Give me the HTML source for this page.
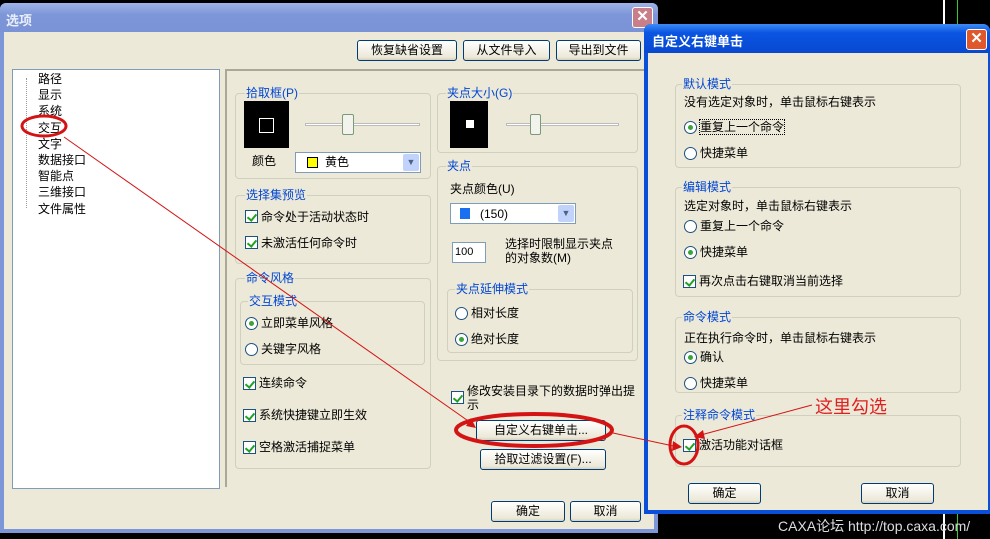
<!DOCTYPE html><html><head><meta charset="utf-8"><style>
*{margin:0;padding:0;box-sizing:border-box}
body{width:990px;height:539px;background:#000;position:relative;overflow:hidden;font-family:"Liberation Sans","Noto Sans CJK SC","WenQuanYi Zen Hei",sans-serif;font-size:12px;color:#000}
.a{position:absolute;white-space:nowrap}
.btn{position:absolute;border:1px solid #003c74;border-radius:3px;background:linear-gradient(#fff,#ece9d8 85%,#d6d0c0);text-align:center;line-height:18px;font-size:12px}
.grp{position:absolute;border:1px solid #d0d0bf;border-radius:4px}
.gl{position:absolute;background:#ece9d8;color:#0046d5;padding:0 1px;line-height:14px;font-size:12px}
.cb{position:absolute;width:13px;height:13px;border:1px solid #1c5180;background:#fff}
.cb:after{content:"";position:absolute;left:3px;top:1px;width:4px;height:7px;border:solid #21a121;border-width:0 2px 2px 0;transform:rotate(40deg)}
.rb{position:absolute;width:13px;height:13px;border:1px solid #1c5180;border-radius:50%;background:#fff}
.rb.on:after{content:"";position:absolute;left:3px;top:3px;width:5px;height:5px;border-radius:50%;background:#3aa33a}
.t{position:absolute;white-space:nowrap;line-height:14px}
</style></head><body>
<!-- dialog 1 -->
<div class="a" style="left:0;top:3px;width:658px;height:530px;background:#7d96d8;border-radius:6px 6px 0 0"></div>
<div class="a" style="left:0;top:3px;width:658px;height:29px;background:linear-gradient(#9fb3e6,#7d96d8 40%,#7a93d6);border-radius:6px 6px 0 0"></div>
<div class="a" style="left:6px;top:10px;color:#e8eefa;font-size:13px;font-weight:bold">选项</div>
<div class="a" style="left:632px;top:7px;width:21px;height:21px;background:#c97f8a;border:1px solid #fff;border-radius:3px;color:#fff;text-align:center;font-size:15px;line-height:18px;font-weight:bold">✕</div>
<div class="a" style="left:4px;top:32px;width:650px;height:497px;background:#ece9d8"></div>
<div class="btn" style="left:357px;top:40px;width:100px;height:21px">恢复缺省设置</div>
<div class="btn" style="left:463px;top:40px;width:87px;height:21px">从文件导入</div>
<div class="btn" style="left:556px;top:40px;width:85px;height:21px">导出到文件</div>
<div class="a" style="left:12px;top:69px;width:208px;height:420px;background:#fff;border:1px solid #7f9db9"></div>
<div class="a" style="left:26px;top:78px;width:1px;height:130px;border-left:1px dotted #999"></div>
<div class="t" style="left:38px;top:71px;line-height:16.2px">路径<br>显示<br>系统<br>交互<br>文字<br>数据接口<br>智能点<br>三维接口<br>文件属性</div>
<div class="a" style="left:225px;top:69px;width:420px;height:418px;border-top:2px solid #aca899;border-left:2px solid #aca899"></div>
<!-- 拾取框 -->
<div class="grp" style="left:235px;top:93px;width:196px;height:86px"></div><div class="gl" style="left:245px;top:86px">拾取框(P)</div>
<div class="a" style="left:244px;top:101px;width:45px;height:47px;background:#000"></div>
<div class="a" style="left:259px;top:118px;width:15px;height:15px;border:1px solid #fff"></div>
<div class="a" style="left:305px;top:123px;width:115px;height:3px;border:1px solid #bbb;background:#fff"></div>
<div class="a" style="left:342px;top:114px;width:12px;height:21px;background:#f3f3ee;border:1px solid #7a9a7a;border-radius:2px"></div>
<div class="t" style="left:252px;top:154px">颜色</div>
<div class="a" style="left:295px;top:152px;width:126px;height:21px;background:#fff;border:1px solid #7f9db9"></div>
<div class="a" style="left:307px;top:157px;width:11px;height:11px;background:#ff0;border:1px solid #000"></div>
<div class="t" style="left:325px;top:155px">黄色</div>
<div class="a" style="left:403px;top:154px;width:16px;height:17px;background:#c1d3fb;border-radius:2px;color:#4d6185;font-size:9px;text-align:center;line-height:17px">▼</div>
<!-- 夹点大小 -->
<div class="grp" style="left:437px;top:93px;width:201px;height:60px"></div><div class="gl" style="left:446px;top:86px">夹点大小(G)</div>
<div class="a" style="left:450px;top:101px;width:38px;height:47px;background:#000"></div>
<div class="a" style="left:466px;top:120px;width:8px;height:8px;background:#fff"></div>
<div class="a" style="left:506px;top:123px;width:113px;height:3px;border:1px solid #bbb;background:#fff"></div>
<div class="a" style="left:530px;top:114px;width:11px;height:21px;background:#f3f3ee;border:1px solid #7a9a7a;border-radius:2px"></div>
<!-- 夹点 -->
<div class="grp" style="left:437px;top:166px;width:201px;height:195px"></div><div class="gl" style="left:446px;top:159px">夹点</div>
<div class="t" style="left:450px;top:182px">夹点颜色(U)</div>
<div class="a" style="left:450px;top:203px;width:126px;height:21px;background:#fff;border:1px solid #7f9db9"></div>
<div class="a" style="left:460px;top:208px;width:10px;height:11px;background:#1a6ef0"></div>
<div class="t" style="left:480px;top:207px">(150)</div>
<div class="a" style="left:558px;top:205px;width:16px;height:17px;background:#c1d3fb;border-radius:2px;color:#4d6185;font-size:9px;text-align:center;line-height:17px">▼</div>
<div class="a" style="left:452px;top:242px;width:34px;height:21px;background:#fff;border:1px solid #7f9db9;padding:3px 2px;font-size:11px">100</div>
<div class="t" style="left:505px;top:237px;line-height:14px">选择时限制显示夹点<br>的对象数(M)</div>
<div class="grp" style="left:447px;top:289px;width:186px;height:64px"></div><div class="gl" style="left:455px;top:282px">夹点延伸模式</div>
<div class="rb" style="left:455px;top:307px"></div><div class="t" style="left:471px;top:306px">相对长度</div>
<div class="rb on" style="left:455px;top:333px"></div><div class="t" style="left:471px;top:332px">绝对长度</div>
<!-- 选择集预览 -->
<div class="grp" style="left:235px;top:195px;width:196px;height:69px"></div><div class="gl" style="left:245px;top:188px">选择集预览</div>
<div class="cb" style="left:245px;top:210px"></div><div class="t" style="left:261px;top:210px">命令处于活动状态时</div>
<div class="cb" style="left:245px;top:236px"></div><div class="t" style="left:261px;top:236px">未激活任何命令时</div>
<!-- 命令风格 -->
<div class="grp" style="left:235px;top:278px;width:196px;height:191px"></div><div class="gl" style="left:245px;top:271px">命令风格</div>
<div class="grp" style="left:240px;top:301px;width:185px;height:64px"></div><div class="gl" style="left:248px;top:294px">交互模式</div>
<div class="rb on" style="left:245px;top:317px"></div><div class="t" style="left:261px;top:316px">立即菜单风格</div>
<div class="rb" style="left:245px;top:343px"></div><div class="t" style="left:261px;top:342px">关键字风格</div>
<div class="cb" style="left:243px;top:377px"></div><div class="t" style="left:259px;top:376px">连续命令</div>
<div class="cb" style="left:243px;top:409px"></div><div class="t" style="left:259px;top:408px">系统快捷键立即生效</div>
<div class="cb" style="left:243px;top:441px"></div><div class="t" style="left:259px;top:440px">空格激活捕捉菜单</div>
<div class="cb" style="left:451px;top:391px"></div><div class="t" style="left:467px;top:384px">修改安装目录下的数据时弹出提<br>示</div>
<div class="btn" style="left:476px;top:420px;width:130px;height:21px">自定义右键单击...</div>
<div class="btn" style="left:480px;top:449px;width:126px;height:21px">拾取过滤设置(F)...</div>
<div class="btn" style="left:491px;top:501px;width:74px;height:21px">确定</div>
<div class="btn" style="left:570px;top:501px;width:71px;height:21px">取消</div>
<!-- background lines -->
<div class="a" style="left:943px;top:0;width:2px;height:26px;background:#fff"></div>
<div class="a" style="left:957px;top:0;width:1px;height:26px;background:#3c3"></div>
<div class="a" style="left:943px;top:512px;width:2px;height:27px;background:#fff"></div>
<div class="a" style="left:957px;top:512px;width:1px;height:27px;background:#3c3"></div>
<!-- dialog 2 -->
<div class="a" style="left:644px;top:24px;width:346px;height:490px;background:#0a4fd8;border-radius:7px 7px 0 0"></div>
<div class="a" style="left:644px;top:24px;width:346px;height:29px;background:linear-gradient(#3d8cf6,#0a55e3 30%,#0848d0);border-radius:7px 7px 0 0"></div>
<div class="a" style="left:652px;top:31px;color:#fff;font-size:13px;font-weight:bold">自定义右键单击</div>
<div class="a" style="left:966px;top:29px;width:21px;height:21px;background:#e0572c;border:1px solid #fff;border-radius:3px;color:#fff;text-align:center;font-size:15px;line-height:18px;font-weight:bold">✕</div>
<div class="a" style="left:648px;top:53px;width:340px;height:457px;background:#ece9d8"></div>
<div class="grp" style="left:675px;top:84px;width:286px;height:84px"></div><div class="gl" style="left:682px;top:77px">默认模式</div>
<div class="t" style="left:684px;top:95px">没有选定对象时，单击鼠标右键表示</div>
<div class="rb on" style="left:684px;top:121px"></div><div class="t" style="left:700px;top:120px;outline:1px dotted #000">重复上一个命令</div>
<div class="rb" style="left:684px;top:147px"></div><div class="t" style="left:700px;top:146px">快捷菜单</div>
<div class="grp" style="left:675px;top:187px;width:286px;height:110px"></div><div class="gl" style="left:682px;top:180px">编辑模式</div>
<div class="t" style="left:684px;top:199px">选定对象时，单击鼠标右键表示</div>
<div class="rb" style="left:684px;top:220px"></div><div class="t" style="left:700px;top:219px">重复上一个命令</div>
<div class="rb on" style="left:684px;top:246px"></div><div class="t" style="left:700px;top:245px">快捷菜单</div>
<div class="cb" style="left:683px;top:275px"></div><div class="t" style="left:699px;top:274px">再次点击右键取消当前选择</div>
<div class="grp" style="left:675px;top:317px;width:286px;height:76px"></div><div class="gl" style="left:682px;top:310px">命令模式</div>
<div class="t" style="left:684px;top:331px">正在执行命令时，单击鼠标右键表示</div>
<div class="rb on" style="left:684px;top:351px"></div><div class="t" style="left:700px;top:350px">确认</div>
<div class="rb" style="left:684px;top:377px"></div><div class="t" style="left:700px;top:376px">快捷菜单</div>
<div class="grp" style="left:675px;top:415px;width:286px;height:52px"></div><div class="gl" style="left:682px;top:408px">注释命令模式</div>
<div class="cb" style="left:683px;top:439px"></div><div class="t" style="left:699px;top:438px">激活功能对话框</div>
<div class="btn" style="left:688px;top:483px;width:73px;height:21px">确定</div>
<div class="btn" style="left:861px;top:483px;width:73px;height:21px">取消</div>
<div class="a" style="left:778px;top:516px;color:#ddd;font-size:14px">CAXA论坛 http://top.caxa.com/</div>
<div class="a" style="left:815px;top:393px;color:#e02020;font-size:18px">这里勾选</div>
<svg class="a" style="left:0;top:0" width="990" height="539">
<g fill="none" stroke="#d41414">
<ellipse cx="44" cy="126" rx="22" ry="10" stroke-width="3"/>
<ellipse cx="534" cy="430" rx="78" ry="16" stroke-width="4"/>
<ellipse cx="684" cy="445" rx="14" ry="19" stroke-width="3"/>
<line x1="64" y1="137" x2="474" y2="425" stroke-width="1"/>
<line x1="613" y1="433" x2="678" y2="447" stroke-width="1"/>
<line x1="812" y1="405" x2="697" y2="436" stroke-width="1"/>
</g>
<g fill="#d41414"><polygon points="476,428 466,426 471,418"/><polygon points="682,447 673,441 672,451"/><polygon points="694,437 703,430 705,439"/></g>
</svg>
</body></html>
